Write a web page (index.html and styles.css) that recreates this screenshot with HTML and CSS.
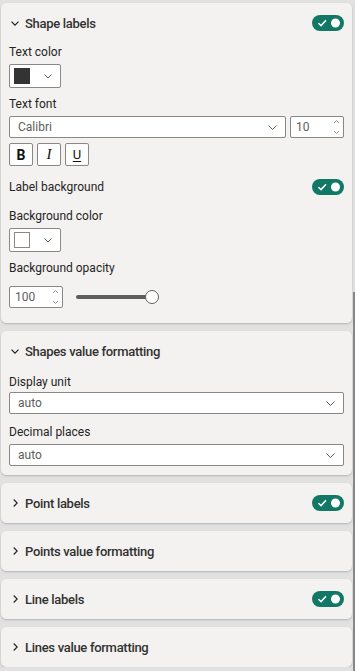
FILE: index.html
```html
<!DOCTYPE html>
<html lang="en">
<head>
    <meta charset="UTF-8">
    <meta name="viewport" content="width=device-width, initial-scale=1.0">
    <title>Format pane</title>
    <link rel="stylesheet" href="styles.css">
</head>
<body>
    <div class="pane">
        <!-- Shape labels -->
        <section class="card">
            <div class="card-head">
                <span class="chev"><svg width="8" height="5" viewBox="0 0 8 5"><path d="M0.5 0.7 L4 4.2 L7.5 0.7" fill="none" stroke="#252423" stroke-width="1.2"/></svg></span>
                <span class="card-title">Shape labels</span>
                <svg class="toggle" width="32" height="16" viewBox="0 0 32 16"><rect width="32" height="16" rx="8" fill="#117865"/><path d="M6.5 8.3 L9 10.6 L14 5.2" fill="none" stroke="#fff" stroke-width="1.5"/><circle cx="23.5" cy="8" r="4.5" fill="#fff"/></svg>
            </div>
            <div class="card-body">
                <label class="field-label">Text color</label>
                <div class="swatch-btn">
                    <span class="swatch swatch-dark"></span>
                    <svg width="8" height="5" viewBox="0 0 8 5"><path d="M0.5 0.5 L4 4 L7.5 0.5" fill="none" stroke="#605e5c" stroke-width="1"/></svg>
                </div>

                <label class="field-label mt8">Text font</label>
                <div class="row">
                    <div class="select grow">
                        <span>Calibri</span>
                        <svg width="9" height="5" viewBox="0 0 9 5"><path d="M0.5 0.5 L4.5 4.5 L8.5 0.5" fill="none" stroke="#605e5c" stroke-width="1"/></svg>
                    </div>
                    <div class="number">
                        <span>10</span>
                        <svg width="7" height="16" viewBox="0 0 7 16"><path d="M1 4 L3.5 1.5 L6 4 M1 12 L3.5 14.5 L6 12" fill="none" stroke="#a19f9d" stroke-width="1"/></svg>
                    </div>
                </div>
                <div class="row style-row">
                    <span class="style-btn bold">B</span>
                    <span class="style-btn italic">I</span>
                    <span class="style-btn under">U</span>
                </div>

                <div class="toggle-row">
                    <span>Label background</span>
                    <svg class="toggle" width="32" height="16" viewBox="0 0 32 16"><rect width="32" height="16" rx="8" fill="#117865"/><path d="M6.5 8.3 L9 10.6 L14 5.2" fill="none" stroke="#fff" stroke-width="1.5"/><circle cx="23.5" cy="8" r="4.5" fill="#fff"/></svg>
                </div>

                <label class="field-label mt13">Background color</label>
                <div class="swatch-btn">
                    <span class="swatch swatch-white"></span>
                    <svg width="8" height="5" viewBox="0 0 8 5"><path d="M0.5 0.5 L4 4 L7.5 0.5" fill="none" stroke="#605e5c" stroke-width="1"/></svg>
                </div>

                <label class="field-label mt8 mb10">Background opacity</label>
                <div class="row opacity-row">
                    <div class="number">
                        <span>100</span>
                        <svg width="7" height="16" viewBox="0 0 7 16"><path d="M1 4 L3.5 1.5 L6 4 M1 12 L3.5 14.5 L6 12" fill="none" stroke="#a19f9d" stroke-width="1"/></svg>
                    </div>
                    <div class="slider">
                        <span class="slider-track"></span>
                        <span class="slider-thumb"></span>
                    </div>
                </div>
            </div>
        </section>

        <!-- Shapes value formatting -->
        <section class="card">
            <div class="card-head">
                <span class="chev"><svg width="8" height="5" viewBox="0 0 8 5"><path d="M0.5 0.7 L4 4.2 L7.5 0.7" fill="none" stroke="#252423" stroke-width="1.2"/></svg></span>
                <span class="card-title">Shapes value formatting</span>
            </div>
            <div class="card-body body-tight">
                <label class="field-label mt2 mb2">Display unit</label>
                <div class="select">
                    <span>auto</span>
                    <svg width="9" height="5" viewBox="0 0 9 5"><path d="M0.5 0.5 L4.5 4.5 L8.5 0.5" fill="none" stroke="#605e5c" stroke-width="1"/></svg>
                </div>
                <label class="field-label mt10">Decimal places</label>
                <div class="select">
                    <span>auto</span>
                    <svg width="9" height="5" viewBox="0 0 9 5"><path d="M0.5 0.5 L4.5 4.5 L8.5 0.5" fill="none" stroke="#605e5c" stroke-width="1"/></svg>
                </div>
            </div>
        </section>

        <section class="card">
            <div class="card-head">
                <span class="chev"><svg width="5" height="8" viewBox="0 0 5 8"><path d="M0.7 0.5 L4.2 4 L0.7 7.5" fill="none" stroke="#252423" stroke-width="1.2"/></svg></span>
                <span class="card-title">Point labels</span>
                <svg class="toggle" width="32" height="16" viewBox="0 0 32 16"><rect width="32" height="16" rx="8" fill="#117865"/><path d="M6.5 8.3 L9 10.6 L14 5.2" fill="none" stroke="#fff" stroke-width="1.5"/><circle cx="23.5" cy="8" r="4.5" fill="#fff"/></svg>
            </div>
        </section>

        <section class="card">
            <div class="card-head">
                <span class="chev"><svg width="5" height="8" viewBox="0 0 5 8"><path d="M0.7 0.5 L4.2 4 L0.7 7.5" fill="none" stroke="#252423" stroke-width="1.2"/></svg></span>
                <span class="card-title">Points value formatting</span>
            </div>
        </section>

        <section class="card">
            <div class="card-head">
                <span class="chev"><svg width="5" height="8" viewBox="0 0 5 8"><path d="M0.7 0.5 L4.2 4 L0.7 7.5" fill="none" stroke="#252423" stroke-width="1.2"/></svg></span>
                <span class="card-title">Line labels</span>
                <svg class="toggle" width="32" height="16" viewBox="0 0 32 16"><rect width="32" height="16" rx="8" fill="#117865"/><path d="M6.5 8.3 L9 10.6 L14 5.2" fill="none" stroke="#fff" stroke-width="1.5"/><circle cx="23.5" cy="8" r="4.5" fill="#fff"/></svg>
            </div>
        </section>

        <section class="card">
            <div class="card-head">
                <span class="chev"><svg width="5" height="8" viewBox="0 0 5 8"><path d="M0.7 0.5 L4.2 4 L0.7 7.5" fill="none" stroke="#252423" stroke-width="1.2"/></svg></span>
                <span class="card-title">Lines value formatting</span>
            </div>
        </section>
    </div>
    <div class="scrollbar"></div>
</body>
</html>
```

FILE: styles.css
```css
body {
    margin: 0;
    background-color: #e1e1e1;
    font-family: "Segoe UI", Roboto, "Noto Sans", sans-serif;
    font-size: 12px;
    color: #252423;
}
.pane {
    display: flex;
    flex-direction: column;
    gap: 8px;
    padding: 3px 3px 0 1px;
}
.card {
    background-color: #f3f2f1;
    border-radius: 5px;
    box-shadow: 0 1px 2px rgba(0, 0, 0, 0.2);
}
.card-head {
    display: flex;
    align-items: center;
    height: 40px;
    padding: 0 8px 0 10px;
}
.chev {
    display: flex;
    justify-content: center;
    width: 8px;
}
.card-title {
    flex: 1;
    margin-left: 6px;
    font-size: 13px;
    font-weight: 500;
    letter-spacing: -0.3px;
    color: #323130;
}
.card-body {
    padding: 1px 8px 15px 8px;
}
.body-tight {
    padding-bottom: 9px;
}
.field-label {
    display: block;
    line-height: 16px;
    margin-bottom: 4px;
}
.mt2 { margin-top: 2px; }
.mt8 { margin-top: 8px; }
.mt10 { margin-top: 10px; }
.mt13 { margin-top: 13px; }
.mb2 { margin-bottom: 2px; }
.mb10 { margin-bottom: 10px; }

.swatch-btn {
    display: flex;
    align-items: center;
    justify-content: space-between;
    box-sizing: border-box;
    width: 52px;
    height: 24px;
    padding: 0 8px 0 4px;
    background-color: #fff;
    border: 1px solid #8a8886;
    border-radius: 2px;
}
.swatch {
    box-sizing: border-box;
    width: 16px;
    height: 16px;
}
.swatch-dark {
    background-color: #333;
}
.swatch-white {
    background-color: #fff;
    border: 1px solid #8a8886;
}
.row {
    display: flex;
    gap: 4px;
}
.select, .number {
    display: flex;
    align-items: center;
    justify-content: space-between;
    box-sizing: border-box;
    height: 22px;
    padding: 0 8px;
    background-color: #fff;
    border: 1px solid #8a8886;
    border-radius: 2px;
    color: #605e5c;
}
.grow {
    flex: 1;
}
.number {
    width: 54px;
    padding: 0 3px 0 5px;
}
.style-row {
    margin-top: 5px;
}
.style-btn {
    box-sizing: border-box;
    display: flex;
    align-items: center;
    justify-content: center;
    width: 24px;
    height: 23px;
    background-color: #fff;
    border: 1px solid #8a8886;
    border-radius: 2px;
    color: #111;
    font-size: 14px;
}
.bold {
    font-weight: 700;
}
.italic {
    font-family: "Liberation Serif", serif;
    font-style: italic;
    font-size: 15px;
}
.under {
    text-decoration: underline;
    text-underline-offset: 2px;
    font-size: 13px;
}
.toggle-row {
    display: flex;
    align-items: center;
    justify-content: space-between;
    height: 16px;
    margin-top: 13px;
}
.opacity-row {
    align-items: center;
    gap: 13px;
}
.slider {
    display: flex;
    align-items: center;
}
.slider-track {
    width: 72px;
    height: 4px;
    border-radius: 2px;
    background-color: #605e5c;
}
.slider-thumb {
    box-sizing: border-box;
    width: 14px;
    height: 14px;
    margin-left: -3px;
    border-radius: 50%;
    background-color: #fff;
    border: 1.5px solid #605e5c;
}
.scrollbar {
    position: absolute;
    top: 292px;
    right: 0;
    bottom: 0;
    width: 2px;
    background-color: #8a8886;
}
```
